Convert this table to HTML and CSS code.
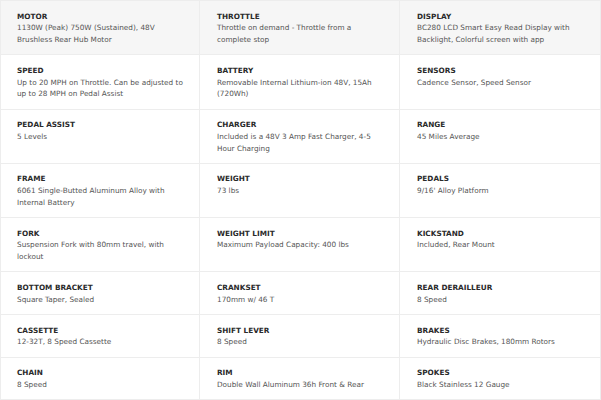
FILE: index.html
```html
<!DOCTYPE html>
<html>
<head>
<meta charset="utf-8">
<link rel="stylesheet" href="styles.css">
</head>
<body>
<div class="specs">
  <div class="cell shade"><div class="label">MOTOR</div><div class="value">1130W (Peak) 750W (Sustained), 48V Brushless Rear Hub Motor</div></div>
  <div class="cell shade"><div class="label">THROTTLE</div><div class="value">Throttle on demand - Throttle from a complete stop</div></div>
  <div class="cell shade"><div class="label">DISPLAY</div><div class="value">BC280 LCD Smart Easy Read Display with Backlight, Colorful screen with app</div></div>

  <div class="cell"><div class="label">SPEED</div><div class="value">Up to 20 MPH on Throttle. Can be adjusted to up to 28 MPH on Pedal Assist</div></div>
  <div class="cell"><div class="label">BATTERY</div><div class="value">Removable Internal Lithium-ion 48V, 15Ah (720Wh)</div></div>
  <div class="cell"><div class="label">SENSORS</div><div class="value">Cadence Sensor, Speed Sensor</div></div>

  <div class="cell"><div class="label">PEDAL ASSIST</div><div class="value">5 Levels</div></div>
  <div class="cell"><div class="label">CHARGER</div><div class="value">Included is a 48V 3 Amp Fast Charger, 4-5 Hour Charging</div></div>
  <div class="cell"><div class="label">RANGE</div><div class="value">45 Miles Average</div></div>

  <div class="cell"><div class="label">FRAME</div><div class="value">6061 Single-Butted Aluminum Alloy with Internal Battery</div></div>
  <div class="cell"><div class="label">WEIGHT</div><div class="value">73 lbs</div></div>
  <div class="cell"><div class="label">PEDALS</div><div class="value">9/16' Alloy Platform</div></div>

  <div class="cell"><div class="label">FORK</div><div class="value">Suspension Fork with 80mm travel, with lockout</div></div>
  <div class="cell"><div class="label">WEIGHT LIMIT</div><div class="value">Maximum Payload Capacity: 400 lbs</div></div>
  <div class="cell"><div class="label">KICKSTAND</div><div class="value">Included, Rear Mount</div></div>

  <div class="cell"><div class="label">BOTTOM BRACKET</div><div class="value">Square Taper, Sealed</div></div>
  <div class="cell"><div class="label">CRANKSET</div><div class="value">170mm w/ 46 T</div></div>
  <div class="cell"><div class="label">REAR DERAILLEUR</div><div class="value">8 Speed</div></div>

  <div class="cell"><div class="label">CASSETTE</div><div class="value">12-32T, 8 Speed Cassette</div></div>
  <div class="cell"><div class="label">SHIFT LEVER</div><div class="value">8 Speed</div></div>
  <div class="cell"><div class="label">BRAKES</div><div class="value">Hydraulic Disc Brakes, 180mm Rotors</div></div>

  <div class="cell"><div class="label">CHAIN</div><div class="value">8 Speed</div></div>
  <div class="cell"><div class="label">RIM</div><div class="value">Double Wall Aluminum 36h Front &amp; Rear</div></div>
  <div class="cell"><div class="label">SPOKES</div><div class="value">Black Stainless 12 Gauge</div></div>
</div>
</body>
</html>
```
FILE: styles.css
```css
html, body {
  margin: 0;
  padding: 0;
  background: #ffffff;
}
body {
  font-family: "DejaVu Sans", "Open Sans", sans-serif;
  font-size: 7.3px;
  line-height: 11.7px;
}
.specs {
  display: grid;
  grid-template-columns: 200px 200px 201px;
  width: 601px;
  border-top: 1px solid #ededed;
}
.cell {
  padding: 9.6px 12px 8.6px 17px;
  border-bottom: 1px solid #ededed;
  border-right: 1px solid #ededed;
  box-sizing: border-box;
}
.cell:nth-child(3n+1) {
  border-left: 1px solid #ededed;
  padding-left: 16px;
}
.shade {
  background: #f6f6f6;
}
.label {
  font-weight: bold;
  color: #2a2a2a;
}
.value {
  color: #555555;
}
```
